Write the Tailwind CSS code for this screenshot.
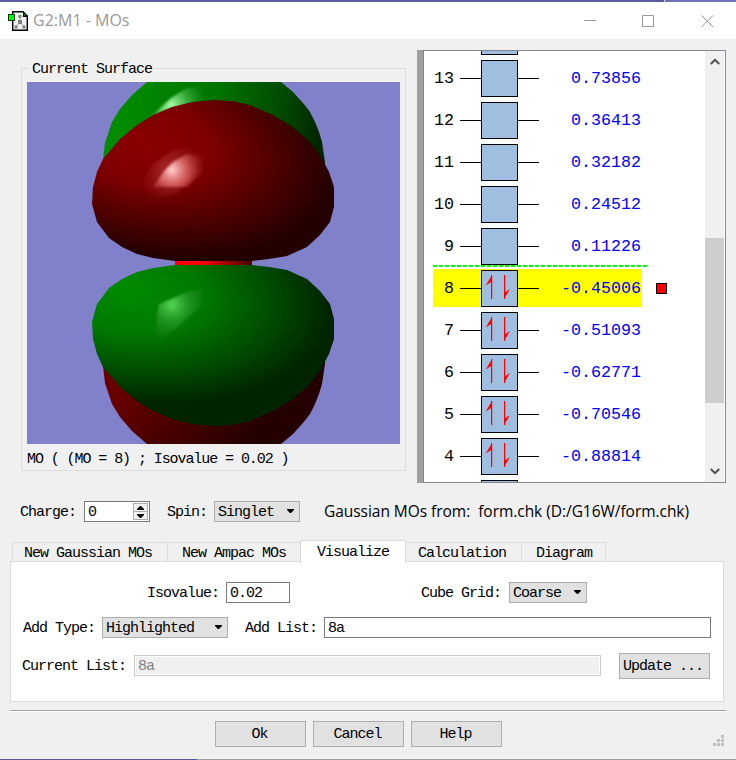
<!DOCTYPE html>
<html lang="en">
<head>
<meta charset="utf-8">
<title>G2:M1 - MOs</title>
<script src="https://cdn.jsdelivr.net/npm/@tailwindcss/browser@4"></script>
</head>
<body class="w-[736px] h-[760px] overflow-hidden bg-[#f0f0f0] text-black">
<div class="flex flex-col w-[736px] h-[760px] font-['Liberation_Mono',monospace] text-[15px] leading-[20px] tracking-[-1px] whitespace-nowrap">
  <div class="flex h-[2px] shrink-0"><div class="w-[664px] bg-[#5a5a9c]"></div><div class="w-px bg-[#d8d8d8]"></div><div class="flex-1 bg-[#7070b4]"></div></div>

  <!-- title bar -->
  <header class="flex items-center h-[37px] shrink-0 bg-white pl-[8px] text-[#999999] font-['Open_Sans',sans-serif]">
    <svg class="w-[20px] h-[20px] shrink-0" viewBox="0 0 20 20">
      <path d="M4.700 .7H15L19.300 5V19.300H4.700Z" fill="#f0f0f0" stroke="#000" stroke-width="1.4"/>
      <path d="M15 .5L19.500 5V6H15Z" fill="#000"/><rect x="16" y="3" width="1.500" height="1.500" fill="#0a0"/>
      <path d="M12 6V11L8 16M12 11L16 16" stroke="#aaa" fill="none"/>
      <g fill="#808080"><rect x="10.500" y="4" width="3" height="3"/><rect x="10" y="9" width="4" height="4"/><rect x="6.500" y="14.500" width="3" height="3"/><rect x="14.500" y="14.500" width="3" height="3"/></g>
      <rect x=".5" y="3.500" width="6" height="6" fill="#00ff00" stroke="#003800"/>
    </svg>
    <div class="ml-[5px] text-[16px] tracking-normal -mt-px">G2:M1 - MOs</div>
    <svg class="ml-auto mr-[22px] w-[130px] h-[14px]" viewBox="0 0 130 14" fill="none" stroke="#999">
      <path d="M0 6.500H12M58.500 1.500H69.500V12.500H58.500ZM117.500 1.500L129 13M129 1.500L117.500 13"/>
    </svg>
  </header>

  <!-- surface and orbital list -->
  <main class="flex h-[444px] shrink-0 pt-[11px]">
    <section class="relative ml-[21px] mt-[18px] w-[385px] h-[403px] border border-[#dcdcdc] pt-[13px] pl-[5px]">
      <div class="absolute left-[7px] top-[-9px] px-[3px] bg-[#f0f0f0] leading-[20px]">Current Surface</div>
      <svg class="block w-[373px] h-[362px]" viewBox="0 0 373 362">
        <defs>
          <radialGradient id="red" gradientUnits="userSpaceOnUse" cx="0" cy="0" r="1" gradientTransform="translate(112 58) rotate(12) scale(198 112)">
            <stop offset="0" stop-color="#8b0000"/><stop offset=".38" stop-color="#7d0000"/><stop offset=".72" stop-color="#4c0000"/><stop offset="1" stop-color="#240000"/>
          </radialGradient>
          <radialGradient id="green" gradientUnits="userSpaceOnUse" cx="0" cy="0" r="1" gradientTransform="translate(96 207) rotate(8) scale(208 112)">
            <stop offset="0" stop-color="#008b00"/><stop offset=".38" stop-color="#007900"/><stop offset=".72" stop-color="#004c00"/><stop offset="1" stop-color="#002400"/>
          </radialGradient>
          <linearGradient id="backGreen" gradientUnits="userSpaceOnUse" x1="100" y1="20" x2="292" y2="50">
            <stop offset="0" stop-color="#008b00"/><stop offset=".45" stop-color="#007400"/><stop offset=".8" stop-color="#004900"/><stop offset="1" stop-color="#002600"/>
          </linearGradient>
          <linearGradient id="backRed" gradientUnits="userSpaceOnUse" x1="110" y1="295" x2="200" y2="380">
            <stop offset="0" stop-color="#680000"/><stop offset=".5" stop-color="#480000"/><stop offset="1" stop-color="#250000"/>
          </linearGradient>
          <linearGradient id="link"><stop offset=".35" stop-color="#ff0000"/><stop offset=".95" stop-color="#500000"/></linearGradient>
          <radialGradient id="shineR" gradientUnits="userSpaceOnUse" cx="145" cy="88" r="34"><stop offset="0" stop-color="#ffd0d0"/><stop offset=".45" stop-color="#e87070" stop-opacity=".7"/><stop offset="1" stop-color="#a02020" stop-opacity=".1"/></radialGradient>
          <radialGradient id="hazeR" gradientUnits="userSpaceOnUse" cx="145" cy="90" r="36"><stop offset="0" stop-color="#d06060" stop-opacity=".6"/><stop offset="1" stop-color="#a02020" stop-opacity="0"/></radialGradient>
          <radialGradient id="shineG" gradientUnits="userSpaceOnUse" cx="145" cy="223" r="36"><stop offset="0" stop-color="#54d854"/><stop offset=".5" stop-color="#30a030" stop-opacity=".6"/><stop offset="1" stop-color="#208020" stop-opacity=".1"/></radialGradient>
          <radialGradient id="shineB" gradientUnits="userSpaceOnUse" cx="144" cy="23" r="34"><stop offset="0" stop-color="#a8ffa8"/><stop offset=".5" stop-color="#50c050" stop-opacity=".7"/><stop offset="1" stop-color="#209020" stop-opacity=".15"/></radialGradient>
          <filter id="soft"><feGaussianBlur stdDeviation="1.2"/></filter>
        </defs>
        <rect width="373" height="362" fill="#8080cb"/>
        <path d="M76 84V78L78 61L85 40L93 27L105 13L120 0H254L266 10L276 21L283 30L288 40L292 50L295 60L298 80V90Z" fill="url(#backGreen)"/>
        <path d="M121 37L144 16L160 6L176 4V19L150 32Z" fill="url(#shineB)" filter="url(#soft)"/>
        <path d="M76 278V284L78 301L85 322L93 335L105 349L120 362H254L266 352L276 341L283 332L288 322L292 312L295 302L298 282V272Z" fill="url(#backRed)"/>
        <rect x="148" y="178" width="77" height="6" fill="url(#link)"/>
        <path d="M186 18L165 20L145 25L126 33L110 43L93 57L76 77L70 90L66 105L65 122L70 140L82 156L95 165L110 172L126 176L148 179H225L242 177L260 174L280 165L293 153L303 140L307 125V105L302 90L293 73L280 57L264 44L246 33L223 23L205 19Z" fill="url(#red)"/>
        <path d="M112 105L124 84L145 68L176 62L170 90L150 112L130 117Z" fill="url(#hazeR)" filter="url(#soft)"/>
        <path d="M126 105L138 88L146 80L160 72L176 75L175 91L160 105Z" fill="url(#shineR)" filter="url(#soft)"/>
        <path d="M186 344L165 342L145 337L126 329L110 319L93 305L76 285L70 272L66 257L65 240L70 222L82 206L95 197L110 190L126 186L148 183H225L242 185L260 188L280 197L293 209L303 222L307 237V257L302 272L293 289L280 305L264 318L246 329L223 339L205 343Z" fill="url(#green)"/>
        <path d="M130 231L132 222L160 210L176 207L175 223L150 246L128 262Z" fill="url(#shineG)" filter="url(#soft)"/>
      </svg>
      <div class="mt-[6px] tracking-[-1.08px]">MO ( (MO = 8) ; Isovalue = 0.02 )</div>
    </section>

    <section class="flex ml-[11px] w-[309px] h-[433px] bg-white border-y border-r border-[#828790]">
      <div class="w-[6px] bg-[#a0a0a0] shrink-0 -my-px"></div>
      <div class="w-px bg-[#828790] shrink-0"></div>
      <div class="relative w-[281px] shrink-0 overflow-hidden pl-[9px] text-[16.67px] leading-[40px] tracking-normal">
        <div id="levels" class="-mt-[35px]"></div>
        <div class="absolute left-[9px] top-[214px] w-[214px] h-[2px] bg-[repeating-linear-gradient(90deg,#00ff00_0_4px,transparent_4px_6px)]"></div>
        <div class="absolute left-[232px] top-[232px] size-[11px] bg-[#ff0000] border border-black"></div>
      </div>
      <div class="w-[19px] bg-[#f0f0f0] flex flex-col items-center">
        <svg class="mt-[7px] w-[10px] h-[7px]" viewBox="0 0 10 7"><path d="M.8 6L5 1.800L9.200 6" fill="none" stroke="#505050" stroke-width="2"/></svg>
        <div class="mt-[173px] w-full h-[165px] bg-[#cdcdcd]"></div>
        <svg class="mt-[65px] w-[10px] h-[7px]" viewBox="0 0 10 7"><path d="M.8 1L5 5.200L9.200 1" fill="none" stroke="#505050" stroke-width="2"/></svg>
      </div>
    </section>
  </main>

  <!-- charge and spin -->
  <div class="flex items-center h-[21px] shrink-0 mt-[18px] pl-[20px] [&_span]:pt-[2px]">
    <span class="w-[64px]">Charge:</span>
    <div class="flex w-[66px] h-[21px] border border-[#7a7a7a] bg-white pl-[3px] pr-px py-px">
      <span class="leading-[16px]">0</span>
      <div class="ml-auto flex flex-col w-[15px] h-[17px] border border-[#adadad] bg-[#f0f0f0]">
        <div class="flex-1 flex items-center justify-center border-b border-[#adadad]"><svg class="w-[7px] h-[4px]" viewBox="0 0 7 4"><path d="M0 4V3L3 0H4L7 3V4Z"/></svg></div>
        <div class="flex-1 flex items-center justify-center"><svg class="w-[7px] h-[4px]" viewBox="0 0 7 4"><path d="M0 0H7V1L4 4H3L0 1Z"/></svg></div>
      </div>
    </div>
    <span class="ml-[17px] w-[47px]">Spin:</span>
    <div class="flex items-center w-[86px] h-[21px] border border-[#adadad] bg-[#e1e1e1] pl-[3px] pr-[5px]"><span>Singlet</span><svg class="ml-auto mb-px w-[7px] h-[4px]" viewBox="0 0 7 4"><path d="M0 0H7V1L4 4H3L0 1Z"/></svg></div>
    <div class="ml-[24px] -mt-[2px] font-['Open_Sans',sans-serif] text-[15.5px] tracking-[-0.04px]">Gaussian MOs from:&nbsp; form.chk (D:/G16W/form.chk)</div>
  </div>

  <!-- tabs -->
  <nav class="flex items-end h-[22px] shrink-0 mt-[18px] pl-[12px] -mb-px relative leading-[22px]">
    <div class="w-[156px] h-[20px] border-t border-x border-[#dcdcdc] pl-[11px]">New Gaussian MOs</div>
    <div class="w-[132px] h-[20px] border-t border-[#dcdcdc] pl-[14px]">New Ampac MOs</div>
    <div class="w-[106px] h-[23px] -mb-px border-t border-x border-[#dcdcdc] bg-white pl-[16px] pt-px">Visualize</div>
    <div class="w-[116px] h-[20px] border-t border-r border-[#dcdcdc] pl-[12px]">Calculation</div>
    <div class="w-[84px] h-[20px] border-t border-r border-[#dcdcdc] pl-[14px]">Diagram</div>
  </nav>
  <section class="flex flex-col ml-[10px] w-[714px] h-[141px] shrink-0 border border-[#dcdcdc] bg-white pt-[20px] pl-[11px] [&_span]:pt-[2px]">
    <div class="flex items-center h-[21px] pl-[125px]">
      <span class="w-[79px]">Isovalue:</span>
      <div class="w-[64px] h-[21px] border border-[#7a7a7a] pl-[3px] leading-[21px]">0.02</div>
      <span class="ml-[131px] w-[88px]">Cube Grid:</span>
      <div class="flex items-center w-[78px] h-[21px] border border-[#adadad] bg-[#e1e1e1] pl-[3px] pr-[5px]"><span>Coarse</span><svg class="ml-auto mb-px w-[7px] h-[4px]" viewBox="0 0 7 4"><path d="M0 0H7V1L4 4H3L0 1Z"/></svg></div>
    </div>
    <div class="flex items-center h-[21px] mt-[14px]">
      <span class="w-[80px] pl-px">Add Type:</span>
      <div class="flex items-center w-[126px] h-[21px] border border-[#adadad] bg-[#e1e1e1] pl-[3px] pr-[5px]"><span>Highlighted</span><svg class="ml-auto mb-px w-[7px] h-[4px]" viewBox="0 0 7 4"><path d="M0 0H7V1L4 4H3L0 1Z"/></svg></div>
      <span class="ml-[17px] w-[79px]">Add List:</span>
      <div class="w-[387px] h-[21px] border border-[#7a7a7a] pl-[3px] leading-[21px]">8a</div>
    </div>
    <div class="flex items-center h-[26px] mt-[15px]">
      <span class="w-[112px]">Current List:</span>
      <div class="w-[467px] h-[21px] -mt-px border border-[#cccccc] p-px"><div class="h-full bg-[#f0f0f0] pl-[2px] leading-[20px] text-[#838383]">8a</div></div>
      <div class="ml-[18px] w-[91px] h-[26px] border border-[#adadad] bg-[#e1e1e1] pl-[3px] leading-[26px]">Update ...</div>
    </div>
  </section>
  <div class="ml-[10px] mt-[8px] w-[716px] h-[2px] shrink-0 bg-white border-t border-[#a0a0a0]"></div>

  <!-- dialog buttons -->
  <footer class="flex mt-[9px] pl-[215px] gap-[7px] h-[26px] shrink-0 text-center leading-[26px]">
    <div class="w-[91px] border border-[#adadad] bg-[#e1e1e1] pr-[2px]">Ok</div>
    <div class="w-[91px] border border-[#adadad] bg-[#e1e1e1] pr-[2px]">Cancel</div>
    <div class="w-[91px] border border-[#adadad] bg-[#e1e1e1] pr-[2px]">Help</div>
    <svg class="ml-[204px] mt-[14px] w-[11px] h-[11px]" viewBox="0 0 11 11" fill="#bfbfbf" shape-rendering="crispEdges"><path d="M8 0h3v3h-3zM4 4h3v3h-3zM8 4h3v3h-3zM0 8h3v3h-3zM4 8h3v3h-3zM8 8h3v3h-3z"/></svg>
  </footer>
  <div class="flex h-px shrink-0 mt-auto"><div class="w-[197px] bg-[#5a5a9c]"></div><div class="flex-1 bg-[#a0a0a0]"></div></div>
</div>

<script>
const levels = [["",""],["13","0.73856"],["12","0.36413"],["11","0.32182"],["10","0.24512"],["9","0.11226"],["8","-0.45006"],["7","-0.51093"],["6","-0.62771"],["5","-0.70546"],["4","-0.88814"],["",""]];
const arrows = '<svg class="block w-[35px] h-[35px]" viewBox="0 0 35 35" fill="#ff0000"><rect x="9" y="4" width="1.2" height="24"/><path d="M10 4L3.800 14.500L9 11Z"/><rect x="22" y="4" width="1.2" height="24"/><path d="M22 28L28 18L23 21.500Z"/></svg>';
document.getElementById('levels').innerHTML = levels.map(([n, e], i) =>
  `<div class="h-[42px] w-[209px] pb-[2px] ${n === '8' ? 'bg-[linear-gradient(#ffff00,#ffff00)] bg-no-repeat bg-[length:209px_38px] bg-[position:0_1px]' : ''}">
    <div class="flex items-center h-[41px]">
    <b class="w-[21px] text-right font-normal">${n}</b>
    <i class="ml-[6px] w-[21px] h-px bg-black"></i>
    <div class="w-[37px] h-[37px] border border-black bg-[#a0bedf]">${i > 5 ? arrows : ''}</div>
    <i class="w-[21px] h-px bg-black"></i>
    <b class="w-[102px] text-right font-normal text-[#0000ff]">${e}</b>
    </div></div>`.replace(/>\s+</g, '><')).join('');
</script>
</body>
</html>
